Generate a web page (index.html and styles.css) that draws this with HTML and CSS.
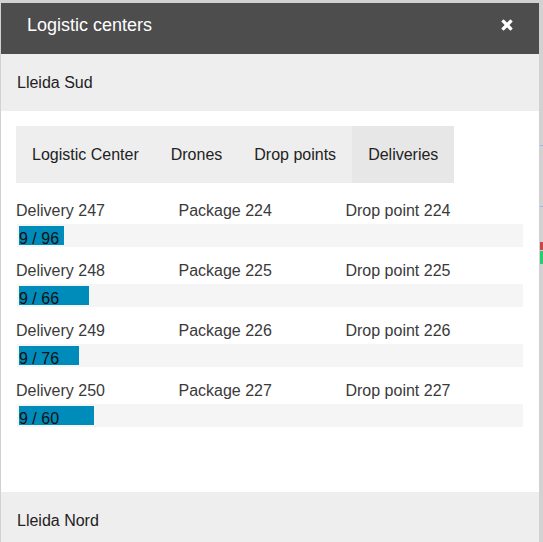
FILE: index.html
```html
<!DOCTYPE html>
<html>
<head>
<meta charset="utf-8">
<link rel="stylesheet" href="styles.css">
</head>
<body>
<div class="map-marker marker-red"></div>
<div class="map-marker marker-green"></div>
<div class="map-line line-a"></div>
<div class="map-line line-b"></div>
<div class="modal">
  <div class="modal-header">
    <span class="modal-title">Logistic centers</span>
    <svg class="close-icon" width="12" height="12" viewBox="0 0 12 12">
      <rect x="-0.6" y="4.3" width="13.2" height="3.4" rx="0.8" fill="#fff" transform="rotate(45 6 6)"/>
      <rect x="-0.6" y="4.3" width="13.2" height="3.4" rx="0.8" fill="#fff" transform="rotate(-45 6 6)"/>
    </svg>
  </div>
  <div class="acc-title">Lleida Sud</div>
  <div class="acc-content">
    <div class="tabs">
      <div class="tab">Logistic Center</div>
      <div class="tab">Drones</div>
      <div class="tab">Drop points</div>
      <div class="tab active">Deliveries</div>
    </div>
    <div class="tab-content">
      <div class="delivery">
        <div class="cols"><span>Delivery 247</span><span>Package 224</span><span>Drop point 224</span></div>
        <div class="progress"><div class="meter" style="width:9%">9 / 96</div></div>
      </div>
      <div class="delivery">
        <div class="cols"><span>Delivery 248</span><span>Package 225</span><span>Drop point 225</span></div>
        <div class="progress"><div class="meter" style="width:14%">9 / 66</div></div>
      </div>
      <div class="delivery">
        <div class="cols"><span>Delivery 249</span><span>Package 226</span><span>Drop point 226</span></div>
        <div class="progress"><div class="meter" style="width:12%">9 / 76</div></div>
      </div>
      <div class="delivery">
        <div class="cols"><span>Delivery 250</span><span>Package 227</span><span>Drop point 227</span></div>
        <div class="progress"><div class="meter" style="width:15%">9 / 60</div></div>
      </div>
    </div>
  </div>
  <div class="acc-title">Lleida Nord</div>
</div>
</body>
</html>
```
FILE: styles.css
```css
html, body {
  margin: 0;
  padding: 0;
  height: 100%;
  overflow: hidden;
}
body {
  background: #d2d2d2;
  font-family: "Liberation Sans", Arial, sans-serif;
  font-size: 16px;
  color: #333;
  position: relative;
}
.map-marker {
  position: absolute;
  left: 540px;
  width: 3px;
}
.marker-red { top: 242px; height: 8px; background: #c9474a; }
.marker-green { top: 251px; height: 13px; background: #2ecc71; }
.map-line {
  position: absolute;
  left: 540px;
  width: 3px;
  height: 1px;
  background: #9db8e0;
}
.line-a { top: 145px; }
.line-b { top: 206px; }
.modal {
  margin: 3px 0 0 1px;
  width: 538px;
  background: #fff;
}
.modal-header {
  height: 51px;
  box-sizing: border-box;
  background: #4d4d4d;
  display: flex;
  justify-content: space-between;
  align-items: flex-start;
  padding: 11px 26px 0 26px;
}
.modal-title {
  color: #fff;
  font-size: 18px;
  line-height: 22px;
}
.close-icon {
  margin-top: 5px;
  display: block;
}
.acc-title {
  height: 57px;
  box-sizing: border-box;
  background: #eeeeee;
  display: flex;
  align-items: center;
  padding-left: 16px;
  color: #222;
}
.acc-content {
  padding: 15px 15px 54px 15px;
}
.tabs {
  display: flex;
  width: fit-content;
  background: #eeeeee;
}
.tab {
  height: 57px;
  display: flex;
  align-items: center;
  padding: 0 16px;
  color: #222;
}
.tab.active {
  background: #e7e7e7;
}
.tab-content {
  padding-top: 15px;
}
.delivery {
  margin-bottom: 10px;
}
.cols {
  display: flex;
  line-height: 25px;
  color: #3a3a3a;
}
.cols span {
  flex: 1 1 auto;
}
.progress {
  height: 25px;
  box-sizing: border-box;
  border: 1px solid #fff;
  padding: 2px;
  background: #f5f5f5;
}
.meter {
  height: 100%;
  background: #008cba;
  color: #111;
  line-height: 25px;
  white-space: nowrap;
}
```
